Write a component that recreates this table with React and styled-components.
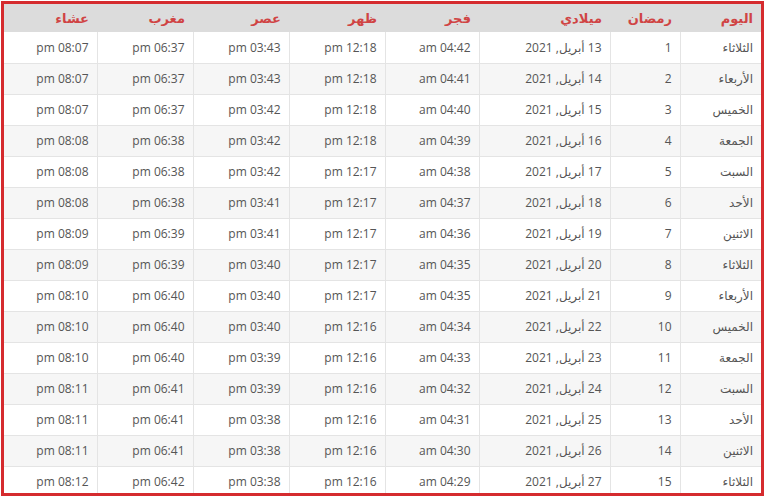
import React from "react";
import styled, { createGlobalStyle } from "styled-components";

const Global = createGlobalStyle`
  html, body { margin: 0; padding: 0; background: #fff; }
  body { font-family: "Open Sans", "DejaVu Sans", sans-serif; }
`;

const Frame = styled.div`
  margin: 1px 0 0 1px;
  width: 757px;
  height: 489px;
  border: 3px solid #d52b2e;
  overflow: hidden;
  direction: rtl;
`;

const Table = styled.table`
  width: 757px;
  table-layout: fixed;
  border-collapse: collapse;
  font-family: "Open Sans", "DejaVu Sans", sans-serif;
`;

const Col = styled.col`
  width: ${(p) => p.$w}px;
`;

const HeadRow = styled.tr`
  background: #dcdcdc;
  height: 28px;
`;

const Th = styled.th`
  box-sizing: border-box;
  padding: 0 8px;
  text-align: right;
  font-size: 13px;
  font-weight: 600;
  color: #d04444;
  white-space: nowrap;
  overflow: hidden;
`;

const Row = styled.tr`
  height: 31px;
  background: ${(p) => (p.$odd ? "#ffffff" : "#f6f6f6")};
  border-bottom: 1px solid #e4e4e4;
`;

const Td = styled.td`
  box-sizing: border-box;
  padding: 0 8px;
  text-align: right;
  font-size: 12px;
  color: #555555;
  white-space: nowrap;
  overflow: hidden;
  border-left: 1px solid #e4e4e4;
  &:last-child { border-left: none; }
`;

const columns = [
  { label: "اليوم", w: 81 },
  { label: "رمضان", w: 70 },
  { label: "ميلادي", w: 131 },
  { label: "فجر", w: 94 },
  { label: "ظهر", w: 96 },
  { label: "عصر", w: 96 },
  { label: "مغرب", w: 96 },
  { label: "عشاء", w: 93 },
];

const data = [
  ["الثلاثاء", 13, "04:42", "12:18", "03:43", "06:37", "08:07"],
  ["الأربعاء", 14, "04:41", "12:18", "03:43", "06:37", "08:07"],
  ["الخميس", 15, "04:40", "12:18", "03:42", "06:37", "08:07"],
  ["الجمعة", 16, "04:39", "12:18", "03:42", "06:38", "08:08"],
  ["السبت", 17, "04:38", "12:17", "03:42", "06:38", "08:08"],
  ["الأحد", 18, "04:37", "12:17", "03:41", "06:38", "08:08"],
  ["الاثنين", 19, "04:36", "12:17", "03:41", "06:39", "08:09"],
  ["الثلاثاء", 20, "04:35", "12:17", "03:40", "06:39", "08:09"],
  ["الأربعاء", 21, "04:35", "12:17", "03:40", "06:40", "08:10"],
  ["الخميس", 22, "04:34", "12:16", "03:40", "06:40", "08:10"],
  ["الجمعة", 23, "04:33", "12:16", "03:39", "06:40", "08:10"],
  ["السبت", 24, "04:32", "12:16", "03:39", "06:41", "08:11"],
  ["الأحد", 25, "04:31", "12:16", "03:38", "06:41", "08:11"],
  ["الاثنين", 26, "04:30", "12:16", "03:38", "06:41", "08:11"],
  ["الثلاثاء", 27, "04:29", "12:16", "03:38", "06:42", "08:12"],
];

export default function App() {
  return (
    <>
      <Global />
      <Frame>
        <Table>
          <colgroup>
            {columns.map((c) => (
              <Col key={c.label} $w={c.w} />
            ))}
          </colgroup>
          <thead>
            <HeadRow>
              {columns.map((c) => (
                <Th key={c.label}>{c.label}</Th>
              ))}
            </HeadRow>
          </thead>
          <tbody>
            {data.map((r, i) => (
              <Row key={i} $odd={i % 2 === 0}>
                <Td>{r[0]}</Td>
                <Td>{i + 1}</Td>
                <Td>{`${r[1]} أبريل, 2021`}</Td>
                <Td>{`${r[2]} am`}</Td>
                <Td>{`${r[3]} pm`}</Td>
                <Td>{`${r[4]} pm`}</Td>
                <Td>{`${r[5]} pm`}</Td>
                <Td>{`${r[6]} pm`}</Td>
              </Row>
            ))}
          </tbody>
        </Table>
      </Frame>
    </>
  );
}
